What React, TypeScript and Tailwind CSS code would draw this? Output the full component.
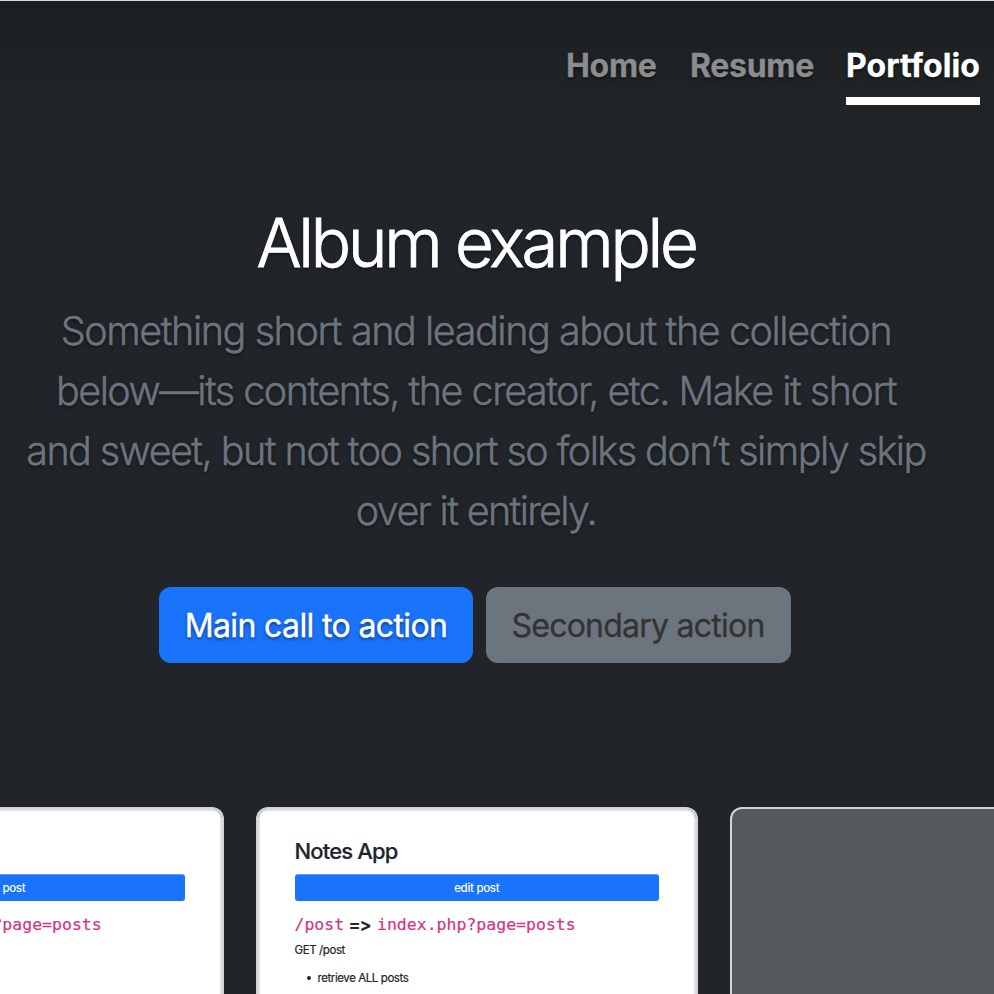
function NoteCard() {
  return (
    <article className="h-[200px] w-[442px] shrink-0 overflow-hidden rounded-t-[12px] border-2 border-b-0 border-[#d3d4d5]">
      <div className="h-full rounded-t-[9px] border-2 border-b-0 border-[#dfe1e7] bg-white pr-[35px] pl-[34.5px] pt-[26px] text-[#212529] shadow-[0_0_0_4px_#dfe1e7]">
        <h2 className="h-[36px] whitespace-nowrap text-[22px] leading-[28px] font-medium tracking-[-0.85px] [-webkit-text-stroke:0.2px]">Notes App</h2>
        <div className="mt-[1px] flex h-[27px] items-center justify-center rounded-[3px] border-t border-[#5b9bff] bg-[#1a73fb] pt-[2px] text-[11.5px] font-medium tracking-[-0.3px] text-white">edit post</div>
        <p className="mt-[13px] flex h-[22px] items-center whitespace-nowrap font-['DejaVu_Sans_Mono','Liberation_Mono',monospace] text-[16.5px] leading-[22px] text-[#d63384] [-webkit-text-stroke:0.2px]">
          <span className="w-[54px]">/post</span>
          <span className="w-[28.5px] font-['Inter',sans-serif] text-[18px] font-semibold tracking-[-1px] text-[#212529]">=&gt;</span>
          <span>index.php?page=posts</span>
        </p>
        <p className="mt-[6px] text-[11.5px] leading-[16px] tracking-[-0.4px] [-webkit-text-stroke:0.2px]">GET /post</p>
        <ul className="mt-[12px] pl-[12px]">
          <li className="flex items-center text-[11.5px] leading-[16px] tracking-[-0.42px] [-webkit-text-stroke:0.2px]">
            <span className="mr-[7px] h-[4px] w-[4px] rounded-full bg-[#212529]" />
            retrieve ALL posts
          </li>
        </ul>
      </div>
    </article>
  );
}

export default function App() {
  return (
    <div className="flex h-[994px] w-[994px] flex-col overflow-hidden border-t border-[#d3dde0] bg-[#212529] bg-[linear-gradient(#1a1e20_0px,#1f2326_70px,#212529_150px)] font-['Inter','Liberation_Sans',sans-serif] [text-shadow:0_1.6px_3.2px_rgba(0,0,0,0.5)]">
      <nav className="flex h-[104px] shrink-0 items-end justify-end gap-[32px] pr-[14px] text-[32px] leading-[50px] font-bold text-[#8b8c8e] [-webkit-text-stroke:0.3px]">
        <a className="h-[64px] w-[92px] whitespace-nowrap tracking-[-0.3px]">Home</a>
        <a className="h-[64px] w-[124px] whitespace-nowrap tracking-[-0.3px]">Resume</a>
        <a className="h-[64px] w-[134px] whitespace-nowrap border-b-8 border-white tracking-[0.1px] text-white">Portfolio</a>
      </nav>

      <main className="flex flex-col">
        <section className="flex h-[702px] w-[952px] flex-col items-center pt-[100px]">
          <h1 className="h-[80px] whitespace-nowrap text-[67px] leading-[76px] font-light tracking-[-3.2px] text-white [-webkit-text-stroke:1px]">Album example</h1>
          <p className="mt-[16px] text-center text-[39.5px] leading-[60px] font-light whitespace-nowrap text-[#6c757d] [-webkit-text-stroke:0.5px]">
            <span className="block tracking-[-1.42px]">Something short and leading about the collection</span>
            <span className="block tracking-[-1.51px]">below—its contents, the creator, etc. Make it short</span>
            <span className="block tracking-[-1.55px]">and sweet, but not too short so folks don’t simply skip</span>
            <span className="block tracking-[-1.66px]">over it entirely.</span>
          </p>
          <div className="mt-[46px] mr-[2px] flex gap-[13px] text-[32px] leading-[48px] whitespace-nowrap">
            <button className="h-[76px] w-[314px] rounded-[12px] bg-[#1a73fb] pt-[2px] tracking-[-0.63px] text-white [text-shadow:0_1.6px_3.2px_rgba(0,0,0,0.5)] [-webkit-text-stroke:0.4px]">Main call to action</button>
            <button className="h-[76px] w-[305px] rounded-[12px] bg-[#6c757d] pt-[2px] pr-[1px] tracking-[-0.76px] text-[#333333] [text-shadow:none] [-webkit-text-stroke:0.3px]">Secondary action</button>
          </div>
        </section>

        <section className="ml-[-218px] flex h-[200px] gap-[32px] [text-shadow:none]">
          <NoteCard />
          <NoteCard />
          <article className="h-[200px] w-[442px] shrink-0 rounded-t-[12px] border-2 border-b-0 border-[#d3d4d5] bg-[#55595c]" />
        </section>
      </main>
    </div>
  );
}
